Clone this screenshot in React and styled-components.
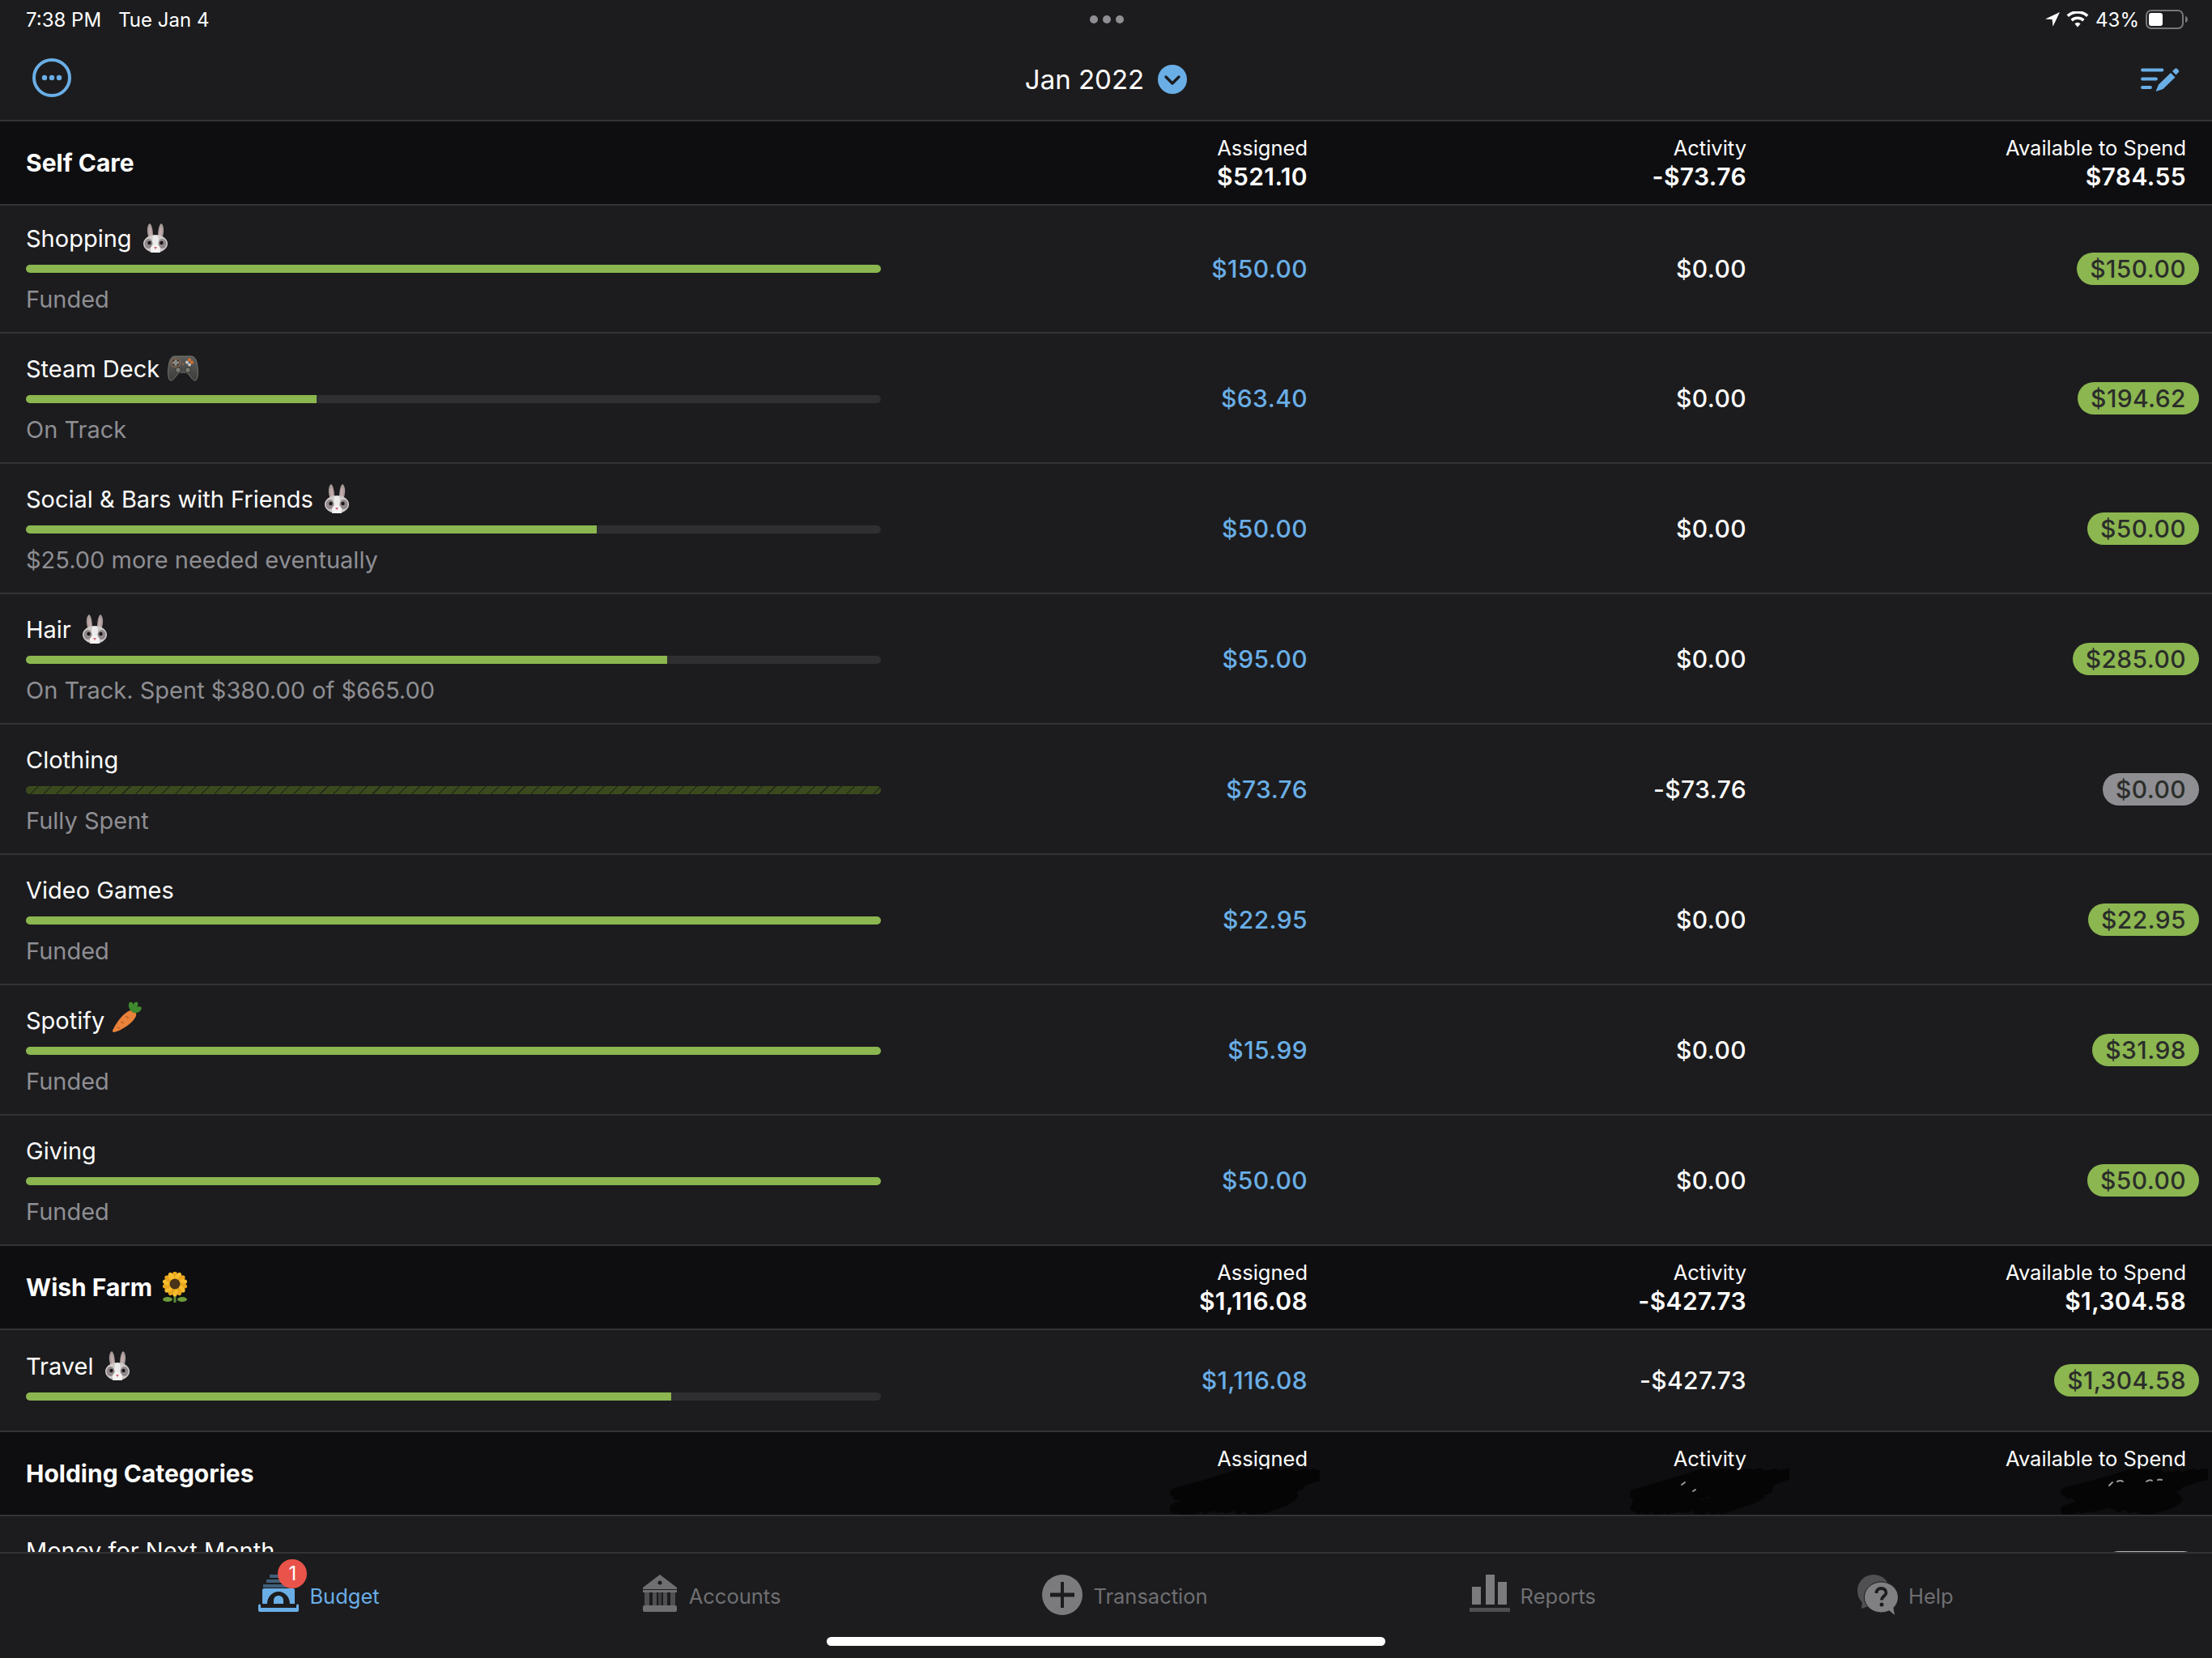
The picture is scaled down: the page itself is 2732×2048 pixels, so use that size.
import React from 'react'
import styled, { createGlobalStyle } from 'styled-components'

const GlobalStyle = createGlobalStyle`
    html, body {
        margin: 0;
        padding: 0;
        background: #1c1c1e;
    }
    body {
        font-family: Inter, "Liberation Sans", sans-serif;
        color: #fff;
    }
`

const BLUE = '#6aaee6'
const GREEN = '#8bb650'

const Screen = styled.div`
    width: 2732px;
    height: 2048px;
    background: #1c1c1e;
    display: flex;
    flex-direction: column;
    overflow: hidden;
`

// Status bar
const StatusBar = styled.div`
    height: 48px;
    flex: none;
    padding: 0 30px 0 32px;
    display: grid;
    grid-template-columns: 1fr auto 1fr;
    align-items: center;
    font-size: 24px;
`

const StatusLeft = styled.div`
    display: flex;
    gap: 21px;
`

const StatusRight = styled.div`
    display: flex;
    justify-content: flex-end;
    align-items: center;
    gap: 8px;
`

const Dots = styled.div`
    display: flex;
    gap: 6px;

    span {
        width: 10px;
        height: 10px;
        border-radius: 50%;
        background: #8e8e93;
    }
`

// Nav bar
const NavBar = styled.div`
    height: 102px;
    flex: none;
    padding: 0 40px;
    display: grid;
    grid-template-columns: 1fr auto 1fr;
    align-items: center;
    border-bottom: 2px solid #333335;
    box-sizing: border-box;
`

const Month = styled.div`
    display: flex;
    align-items: center;
    gap: 17px;
    font-size: 33px;
`

const NavEnd = styled.div`
    display: flex;
    justify-content: flex-end;
`

// Budget table
const Table = styled.div`
    flex: 1;
    min-height: 0;
    overflow: hidden;
`

const Columns = styled.div`
    display: grid;
    grid-template-columns: 1056px 527px 542px 543px;
    padding: 0 32px;
    box-sizing: border-box;
    width: 100%;
    border-bottom: 2px solid #333335;
`

const Section = styled(Columns)`
    height: 104px;
    background: #0e0e10;
    align-items: center;
`

const SectionName = styled.div`
    display: flex;
    align-items: center;
    gap: 12px;
    font-size: 30px;
    font-weight: 700;
`

const Totals = styled.div`
    position: relative;
    text-align: right;
    font-size: 25.5px;
    line-height: 34px;

    b {
        display: block;
        font-size: 30px;
        font-weight: 600;
        line-height: 36px;
        letter-spacing: 0.4px;
    }
`

const Scribble = styled.svg`
    position: absolute;
    right: ${p => p.$right}px;
    bottom: -17px;
    filter: blur(0.7px);
`

const Row = styled(Columns)`
    height: ${p => p.$height}px;
    box-sizing: border-box;
    align-items: center;
`

const Info = styled.div`
    padding-top: ${p => p.$top}px;
    align-self: start;
`

const Name = styled.div`
    display: flex;
    align-items: center;
    gap: 12px;
    height: 36px;
    font-size: 29px;
`

const Bar = styled.div`
    height: 10px;
    margin-top: 15px;
    border-radius: 5px;
    background: #2f2f31;
    overflow: hidden;
`

const Fill = styled.div`
    height: 100%;
    background: ${GREEN};
    ${p => p.$spent && `
        background: repeating-linear-gradient(135deg, #3b4a1e 0 10px, #262c18 10px 11.5px);
    `}
`

const Status = styled.div`
    margin-top: 15px;
    font-size: 29px;
    line-height: 36px;
    color: #8e8e93;
`

const Amount = styled.div`
    text-align: right;
    font-size: 30px;
    font-weight: 500;
    letter-spacing: 0.4px;
    color: ${p => p.$blue ? BLUE : '#fff'};
`

const PillCell = styled.div`
    display: flex;
    justify-content: flex-end;
    margin-right: -16px;
`

const Pill = styled.div`
    height: 40px;
    line-height: 40px;
    padding: 0 16px;
    border-radius: 20px;
    font-size: 30px;
    font-weight: 500;
    letter-spacing: 0.4px;
    color: #2b2d2a;
    background: ${p => p.$color};
`

// Tab bar
const TabBar = styled.div`
    height: 131px;
    flex: none;
    position: relative;
    box-sizing: border-box;
    border-top: 2px solid #333335;
    padding-top: 26px;
    display: flex;
    justify-content: center;
    align-items: flex-start;
    gap: 323px;
`

const Tab = styled.div`
    display: flex;
    align-items: center;
    gap: 13px;
    height: 50px;
    font-size: 25.5px;
    color: ${p => p.$active ? BLUE : '#6f6f72'};
`

const TabIcon = styled.div`
    position: relative;
    display: flex;
    align-self: flex-start;
`

const TabLabel = styled.span`
    margin-top: 3px;
`

const Badge = styled.div`
    position: absolute;
    left: 24px;
    top: -19px;
    width: 36px;
    height: 36px;
    border-radius: 50%;
    background: #e9534a;
    color: #fff;
    font-size: 24px;
    line-height: 36px;
    text-align: center;
`

const HomeBar = styled.div`
    position: absolute;
    left: 1021px;
    top: 103px;
    width: 690px;
    height: 11px;
    border-radius: 6px;
    background: #fff;
`

// Emoji drawings
const Rabbit = () => (
    <svg width="34" height="38" viewBox="0 0 34 38">
        <path d="M9 20C6 12 6 4 10 1c3 2 4 10 4 16z" fill="#a89a9a" />
        <path d="M25 20c3-8 3-16-1-19-3 2-4 10-4 16z" fill="#a89a9a" />
        <path d="M10 17c-1-5-1-9 0-12 2 2 2 7 3 11zM24 17c1-5 1-9 0-12-2 2-2 7-3 11z" fill="#c4acac" />
        <ellipse cx="17" cy="26" rx="15" ry="11" fill="#cfcaca" />
        <path d="M14 16h6l3 21H11z" fill="#ecebeb" />
        <ellipse cx="8.5" cy="26" rx="5" ry="6" fill="#8f8789" />
        <ellipse cx="25.5" cy="26" rx="5" ry="6" fill="#8f8789" />
        <circle cx="9.5" cy="25" r="2.2" fill="#1c1718" />
        <circle cx="24.5" cy="25" r="2.2" fill="#1c1718" />
        <ellipse cx="17" cy="32" rx="6" ry="5" fill="#f4f2f2" />
        <path d="M15 30h4l-2 3z" fill="#d8657c" />
    </svg>
)

const Gamepad = () => (
    <svg width="38" height="32" viewBox="0 0 38 32" style={{ marginLeft: -2 }}>
        <defs>
            <linearGradient id="padBody" x1="0" y1="0" x2="0" y2="1">
                <stop offset="0" stopColor="#5d5e5c" />
                <stop offset="1" stopColor="#3c3d3c" />
            </linearGradient>
        </defs>
        <path d="M9 1h20c5 0 7 5 8 14 1 8 0 16-3 16-4 0-7-8-11-10h-8C11 23 8 31 4 31 1 31 0 23 1 15 2 6 4 1 9 1z" fill="url(#padBody)" stroke="#77786f" strokeWidth="1" />
        <circle cx="10" cy="9" r="5.5" fill="#35322f" stroke="#8a6a50" strokeWidth="1.4" />
        <path d="M8.5 5h3v2.500H14v3h-2.500V13h-3v-2.500H6v-3h2.500z" fill="#8b8c88" />
        <circle cx="27" cy="5.5" r="1.9" fill="#e0722a" />
        <circle cx="27" cy="11.5" r="1.9" fill="#c8c8c4" />
        <circle cx="24" cy="8.5" r="1.9" fill="#c8c8c4" />
        <circle cx="30" cy="8.5" r="1.9" fill="#e0722a" />
        <circle cx="13" cy="18" r="3.4" fill="#77786f" stroke="#2e2e2c" />
        <circle cx="25" cy="18" r="3.4" fill="#77786f" stroke="#2e2e2c" />
        <circle cx="19" cy="11" r="1.1" fill="#b8622a" />
    </svg>
)

const Carrot = () => (
    <svg width="36" height="38" viewBox="0 0 36 38" style={{ marginLeft: -2, marginTop: -8 }}>
        <path d="M22 11c5-1 8 2 7 7C26 26 11 36 2 38c-2 0-2-1-2-2C4 27 13 14 22 11z" fill="#e9823a" />
        <path d="M10 25l4 2M16 18l4 3M6 32l3 1" stroke="#b95c20" strokeWidth="1.2" />
        <path d="M22 11c-2-3-3-7-1-10 2-1 4 0 5 3 0-3 3-4 5-3 1 2 0 5-1 6 2-1 5-1 6 1-1 4-4 6-7 6-3 1-5-1-7-3z" fill="#3f8a2d" />
    </svg>
)

const Sunflower = () => (
    <svg width="32" height="38" viewBox="0 0 32 38">
        <path d="M16 26v12" stroke="#5c8c35" strokeWidth="3" />
        <ellipse cx="7" cy="34" rx="6" ry="3" fill="#6d9b3c" />
        <ellipse cx="25" cy="34" rx="6" ry="3" fill="#6d9b3c" />
        {Array.from({ length: 14 }).map((_, i) => (
            <ellipse key={i} cx="16" cy="5" rx="3.5" ry="5.5" fill={i % 2 ? '#f6bd2e' : '#eaa61e'} transform={`rotate(${i * 25.7} 16 15)`} />
        ))}
        <circle cx="16" cy="15" r="6.5" fill="#4a3317" />
    </svg>
)

// Icons
const MoreIcon = () => (
    <svg width="48" height="48" viewBox="0 0 48 48">
        <circle cx="24" cy="24" r="22" fill="none" stroke={BLUE} strokeWidth="4" />
        <circle cx="15" cy="24" r="3.2" fill={BLUE} />
        <circle cx="24" cy="24" r="3.2" fill={BLUE} />
        <circle cx="33" cy="24" r="3.2" fill={BLUE} />
    </svg>
)

const ChevronCircle = () => (
    <svg width="36" height="36" viewBox="0 0 36 36">
        <circle cx="18" cy="18" r="18" fill={BLUE} />
        <path d="M10 15l8 8 8-8" fill="none" stroke="#1c1c1e" strokeWidth="3.4" strokeLinecap="round" strokeLinejoin="round" />
    </svg>
)

const EditIcon = () => (
    <svg width="48" height="32" viewBox="0 0 48 32">
        <g stroke={BLUE} strokeWidth="3.8" strokeLinecap="round">
            <path d="M2 4.500h24.500M2 15.500h17M2 26h10" />
        </g>
        <path d="M18.500 31l3.500-8.500L37 8l5.500 5.500L27.500 28z" fill={BLUE} />
        <path d="M39 6l3-3c1-1 2-1 3 0l1.500 1.500c1 1 1 2 0 3l-3 3z" fill={BLUE} />
    </svg>
)

const LocationIcon = () => (
    <svg width="18" height="18" viewBox="0 0 18 18">
        <path d="M18 0L0 8.500l8.600.4.9 8.800z" fill="#fff" />
    </svg>
)

const WifiIcon = () => (
    <svg width="28" height="20" viewBox="0 0 28 20">
        <path d="M14 19.500l-3.600-4.200a5.400 5.400 0 0 1 7.200 0zM7.800 12.400L5.500 9.700a12.800 12.800 0 0 1 17 0l-2.300 2.700a9.300 9.300 0 0 0-12.400 0zM3 7L.6 4.300a20 20 0 0 1 26.800 0L25 7A16.500 16.500 0 0 0 3 7z" fill="#fff" />
    </svg>
)

const BatteryIcon = () => (
    <svg width="52" height="24" viewBox="0 0 52 24">
        <rect x="1" y="1" width="45" height="22" rx="6" fill="none" stroke="#77777a" strokeWidth="2" />
        <rect x="4" y="4" width="17" height="16" rx="3" fill="#fff" />
        <path d="M49 8c2 .6 3 2 3 4s-1 3.400-3 4z" fill="#77777a" />
    </svg>
)

const BudgetIcon = () => (
    <svg width="50" height="46" viewBox="0 0 50 46">
        <g fill="#3f5f7a">
            <rect x="14" y="0" width="20" height="4" />
            <rect x="10" y="6" width="28" height="4" />
            <rect x="6" y="12" width="38" height="4" />
        </g>
        <path d="M7 17h36c1 0 2 1 2 2v17h-6c0-8-6-15-14-15S11 28 11 36H5V19c0-1 1-2 2-2z" fill={BLUE} />
        <path d="M19 36v-4c0-4 3-6 6-6s6 2 6 6v4z" fill={BLUE} />
        <path d="M0 38c0-1 1-1.500 1.500-1.500S3 37 3 38v3h44v-3c0-1 1-1.500 1.500-1.500S50 37 50 38v6c0 1-1 2-2 2H2c-1 0-2-1-2-2z" fill={BLUE} />
    </svg>
)

const AccountsIcon = () => (
    <svg width="46" height="46" viewBox="0 0 46 46">
        <path d="M23 0l21 16v2H2v-2z" fill="#6f6f72" />
        <circle cx="23" cy="10" r="2.5" fill="#1c1c1e" />
        <rect x="2" y="19" width="42" height="3" fill="#6f6f72" />
        <g fill="#4f4f52">
            <rect x="4" y="22" width="6" height="16" />
            <rect x="14" y="22" width="5" height="16" />
            <rect x="27" y="22" width="5" height="16" />
            <rect x="36" y="22" width="6" height="16" />
            <rect x="21" y="22" width="4" height="16" opacity="0.7" />
        </g>
        <rect x="2" y="38" width="42" height="8" rx="2" fill="#6f6f72" />
    </svg>
)

const TransactionIcon = () => (
    <svg width="50" height="50" viewBox="0 0 50 50">
        <circle cx="25" cy="25" r="25" fill="#7b7b7e" />
        <rect x="10" y="22.5" width="30" height="5" fill="#1c1c1e" />
        <rect x="23" y="9" width="4" height="32" fill="#1c1c1e" />
    </svg>
)

const ReportsIcon = () => (
    <svg width="50" height="46" viewBox="0 0 50 46">
        <g fill="#7b7b7e">
            <rect x="3" y="15" width="11" height="22" />
            <rect x="20" y="0" width="11" height="37" />
            <rect x="35" y="9" width="11" height="28" />
        </g>
        <rect x="0" y="41" width="50" height="5" fill="#4f4f52" />
    </svg>
)

const HelpIcon = () => (
    <svg width="50" height="50" viewBox="0 0 50 50">
        <circle cx="20" cy="20" r="20" fill="#505053" />
        <path d="M6 33l-1 9 9-3z" fill="#505053" />
        <ellipse cx="29.5" cy="28" rx="21" ry="19" fill="#808083" stroke="#1c1c1e" strokeWidth="1" />
        <path d="M38 43l8 7-2-11z" fill="#808083" />
        <path d="M23.500 23c0-4 2.500-6 6-6s6 2 6 5.500c0 4-5.500 4-5.500 9" fill="none" stroke="#1c1c1e" strokeWidth="3.8" />
        <circle cx="30" cy="37" r="2.5" fill="#1c1c1e" />
    </svg>
)

// The hand scribble over the hidden totals, long strokes rising to the right
const ScribbleMark = ({ right, width, seed, glints }) => {
    const height = 58
    const lines = []
    for (let i = 0; i < 60; i++) {
        const a = Math.sin(i * 12.9 + seed) * 0.5 + 0.5
        const b = Math.sin(i * 78.2 + seed * 3) * 0.5 + 0.5
        const x = 6 + a * (width * 0.6)
        const y = height - 5 - b * 26
        const len = 24 + b * (width * 0.36)
        lines.push(`M${x.toFixed(1)} ${y.toFixed(1)} L${(x + len).toFixed(1)} ${Math.max(4, y - len * 0.34).toFixed(1)}`)
    }
    return (
        <Scribble $right={right} width={width} height={height} viewBox={`0 0 ${width} ${height}`}>
            <path d={lines.join(' ')} fill="none" stroke="#050506" strokeWidth="8" strokeLinecap="round" />
            {glints && <path d={glints} fill="none" stroke="#9a9a9c" strokeWidth="2" strokeLinecap="round" />}
        </Scribble>
    )
}

const rows = [
    { name: 'Shopping', emoji: <Rabbit />, status: 'Funded', pct: 100, assigned: '$150.00', activity: '$0.00', avail: '$150.00', height: 158, top: 22 },
    { name: 'Steam Deck', emoji: <Gamepad />, status: 'On Track', pct: 34, assigned: '$63.40', activity: '$0.00', avail: '$194.62' },
    { name: 'Social & Bars with Friends', emoji: <Rabbit />, status: '$25.00 more needed eventually', pct: 66.8, assigned: '$50.00', activity: '$0.00', avail: '$50.00' },
    { name: 'Hair', emoji: <Rabbit />, status: 'On Track. Spent $380.00 of $665.00', pct: 75, assigned: '$95.00', activity: '$0.00', avail: '$285.00' },
    { name: 'Clothing', status: 'Fully Spent', pct: 100, spent: true, assigned: '$73.76', activity: '-$73.76', avail: '$0.00', grey: true },
    { name: 'Video Games', status: 'Funded', pct: 100, assigned: '$22.95', activity: '$0.00', avail: '$22.95' },
    { name: 'Spotify', emoji: <Carrot />, status: 'Funded', pct: 100, assigned: '$15.99', activity: '$0.00', avail: '$31.98' },
    { name: 'Giving', status: 'Funded', pct: 100, assigned: '$50.00', activity: '$0.00', avail: '$50.00' },
]

function BudgetRow({ row }) {
    return (
        <Row $height={row.height || 161}>
            <Info $top={row.top || 25}>
                <Name>{row.name}{row.emoji}</Name>
                <Bar><Fill $spent={row.spent} style={{ width: `${row.pct}%` }} /></Bar>
                {row.status && <Status>{row.status}</Status>}
            </Info>
            <Amount $blue>{row.assigned}</Amount>
            <Amount>{row.activity}</Amount>
            <PillCell><Pill $color={row.grey ? '#8e8e93' : GREEN}>{row.avail}</Pill></PillCell>
        </Row>
    )
}

function SectionRow({ name, emoji, assigned, activity, avail, scribbled }) {
    return (
        <Section>
            <SectionName>{name}{emoji}</SectionName>
            <Totals>Assigned<b>{assigned}</b>{scribbled && <ScribbleMark right={-15} width={187} seed={3} />}</Totals>
            <Totals>Activity<b>{activity}</b>{scribbled && <ScribbleMark right={-53} width={199} seed={5} glints="M66 20l4-3M80 28l3-2" />}</Totals>
            <Totals>Available to Spend<b>{avail}</b>{scribbled && <ScribbleMark right={-27} width={184} seed={7} glints="M62 21l4-4M72 16q4-2 7 0M108 16q4-3 7-1M122 14q3-1 5 0" />}</Totals>
        </Section>
    )
}

function App() {
    return (
        <Screen>
            <GlobalStyle />
            <StatusBar>
                <StatusLeft><span>7:38 PM</span><span>Tue Jan 4</span></StatusLeft>
                <Dots><span /><span /><span /></Dots>
                <StatusRight><LocationIcon /><WifiIcon /><span>43%</span><BatteryIcon /></StatusRight>
            </StatusBar>
            <NavBar>
                <div><MoreIcon /></div>
                <Month>Jan 2022 <ChevronCircle /></Month>
                <NavEnd><EditIcon /></NavEnd>
            </NavBar>
            <Table>
                <SectionRow name="Self Care" assigned="$521.10" activity="-$73.76" avail="$784.55" />
                {rows.map(row => <BudgetRow key={row.name} row={row} />)}
                <SectionRow name="Wish Farm" emoji={<Sunflower />} assigned="$1,116.08" activity="-$427.73" avail="$1,304.58" />
                <BudgetRow row={{ name: 'Travel', emoji: <Rabbit />, pct: 75.5, assigned: '$1,116.08', activity: '-$427.73', avail: '$1,304.58', height: 126, top: 26 }} />
                <SectionRow name="Holding Categories" assigned={'\u00a0'} activity={'\u00a0'} avail={'\u00a0'} scribbled />
                <Row $height={128}>
                    <Info $top={24}><Name>Money for Next Month</Name></Info>
                    <div />
                    <div />
                    <PillCell><Pill $color="#b5b5b8">$0.00</Pill></PillCell>
                </Row>
            </Table>
            <TabBar>
                <Tab $active>
                    <TabIcon><BudgetIcon /><Badge>1</Badge></TabIcon>
                    <TabLabel>Budget</TabLabel>
                </Tab>
                <Tab><TabIcon><AccountsIcon /></TabIcon><TabLabel>Accounts</TabLabel></Tab>
                <Tab><TabIcon><TransactionIcon /></TabIcon><TabLabel>Transaction</TabLabel></Tab>
                <Tab><TabIcon><ReportsIcon /></TabIcon><TabLabel>Reports</TabLabel></Tab>
                <Tab><TabIcon><HelpIcon /></TabIcon><TabLabel>Help</TabLabel></Tab>
                <HomeBar />
            </TabBar>
        </Screen>
    )
}

export default App
